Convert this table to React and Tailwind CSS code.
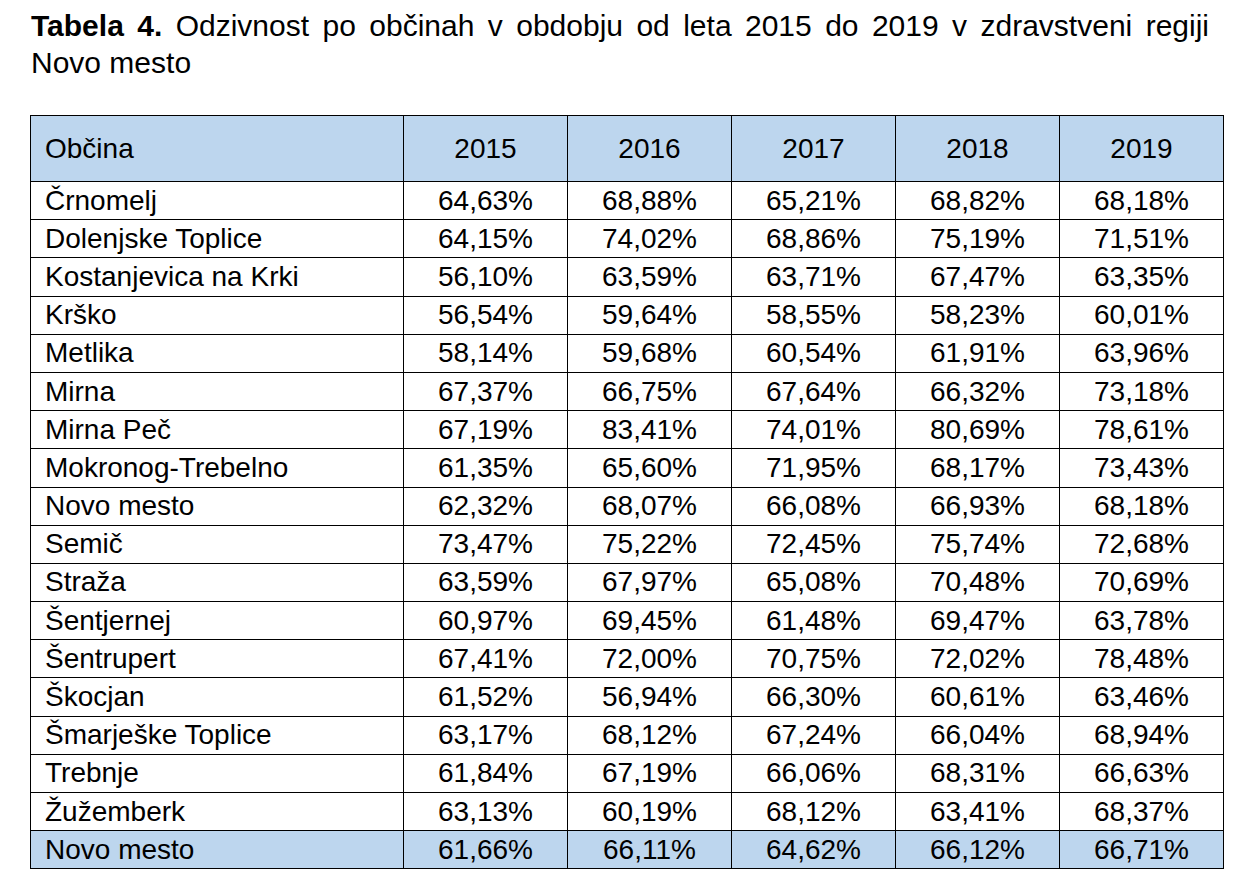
const years = ['2015', '2016', '2017', '2018', '2019'];

const rows = [
  ['Črnomelj', '64,63%', '68,88%', '65,21%', '68,82%', '68,18%'],
  ['Dolenjske Toplice', '64,15%', '74,02%', '68,86%', '75,19%', '71,51%'],
  ['Kostanjevica na Krki', '56,10%', '63,59%', '63,71%', '67,47%', '63,35%'],
  ['Krško', '56,54%', '59,64%', '58,55%', '58,23%', '60,01%'],
  ['Metlika', '58,14%', '59,68%', '60,54%', '61,91%', '63,96%'],
  ['Mirna', '67,37%', '66,75%', '67,64%', '66,32%', '73,18%'],
  ['Mirna Peč', '67,19%', '83,41%', '74,01%', '80,69%', '78,61%'],
  ['Mokronog-Trebelno', '61,35%', '65,60%', '71,95%', '68,17%', '73,43%'],
  ['Novo mesto', '62,32%', '68,07%', '66,08%', '66,93%', '68,18%'],
  ['Semič', '73,47%', '75,22%', '72,45%', '75,74%', '72,68%'],
  ['Straža', '63,59%', '67,97%', '65,08%', '70,48%', '70,69%'],
  ['Šentjernej', '60,97%', '69,45%', '61,48%', '69,47%', '63,78%'],
  ['Šentrupert', '67,41%', '72,00%', '70,75%', '72,02%', '78,48%'],
  ['Škocjan', '61,52%', '56,94%', '66,30%', '60,61%', '63,46%'],
  ['Šmarješke Toplice', '63,17%', '68,12%', '67,24%', '66,04%', '68,94%'],
  ['Trebnje', '61,84%', '67,19%', '66,06%', '68,31%', '66,63%'],
  ['Žužemberk', '63,13%', '60,19%', '68,12%', '63,41%', '68,37%'],
];

const total = ['Novo mesto', '61,66%', '66,11%', '64,62%', '66,12%', '66,71%'];

const DataRow = ({ cells, shaded }) => (
  <tr className={`h-[38.2px] ${shaded ? 'bg-[#bdd6ee]' : ''}`}>
    <td className="border border-black pl-[14px] leading-none">{cells[0]}</td>
    {cells.slice(1).map((v, i) => (
      <td key={i} className="border border-black text-center leading-none">{v}</td>
    ))}
  </tr>
);

export default function App() {
  return (
    <div className="bg-white min-h-screen text-black font-['Liberation_Sans',Arial,sans-serif] text-[28px]">
      {/* caption */}
      <div className="pl-[31px] pr-[34px] pt-[7px]">
        <p className="text-justify text-[30px] leading-[37px] [text-align-last:left]">
          <span className="font-bold">Tabela 4.</span> Odzivnost po občinah v obdobju od leta 2015 do 2019 v zdravstveni regiji Novo mesto
        </p>
      </div>

      <div className="pl-[30px] pt-[34px]">
        <table className="table-fixed border-collapse w-[1193px]">
          <colgroup>
            <col className="w-[373px]" />
            {years.map(y => <col key={y} className="w-[164px]" />)}
          </colgroup>
          <thead>
            <tr className="h-[66px] bg-[#bdd6ee]">
              <th className="border border-black pl-[14px] text-left font-normal leading-none">Občina</th>
              {years.map(y => (
                <th key={y} className="border border-black text-center font-normal leading-none">{y}</th>
              ))}
            </tr>
          </thead>
          <tbody>
            {rows.map(r => <DataRow key={r[0]} cells={r} />)}
            <DataRow cells={total} shaded />
          </tbody>
        </table>
      </div>
    </div>
  );
}
